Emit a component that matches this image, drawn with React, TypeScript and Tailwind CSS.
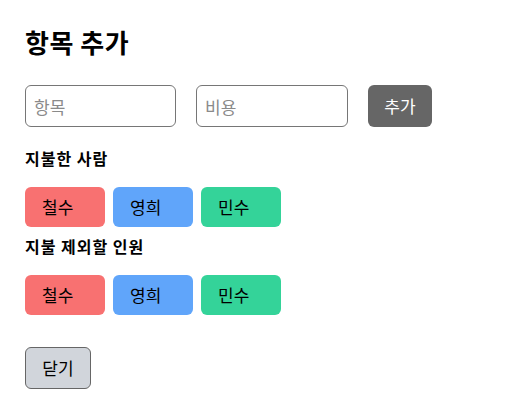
const people = [
  { name: '철수', color: 'bg-[#f87171]' },
  { name: '영희', color: 'bg-[#60a5fa]' },
  { name: '민수', color: 'bg-[#34d399]' },
];

const PersonRow = () => (
  <div className="flex gap-2">
    {people.map((p) => (
      <button
        key={p.name}
        className={`${p.color} w-20 h-10 rounded-md pl-[17px] text-left text-[17px] text-black`}
      >
        {p.name}
      </button>
    ))}
  </div>
);

export default function App() {
  return (
    <div
      className="w-[508px] h-[415px] bg-white px-[25px] pt-[26px]"
      style={{ fontFamily: '"Noto Sans CJK KR", "Noto Sans", sans-serif' }}
    >
      <h2 className="text-[26px] leading-8 font-bold text-black tracking-[0.5px]">항목 추가</h2>

      <div className="flex gap-5 mt-[27px]">
        <input
          type="text"
          placeholder="항목"
          className="w-[151px] h-[42px] border border-[#767676] rounded-md px-2 text-[17px] placeholder:text-[#8a8a8a]"
        />
        <input
          type="text"
          placeholder="비용"
          className="w-[152px] h-[42px] border border-[#767676] rounded-md px-2 text-[17px] placeholder:text-[#8a8a8a]"
        />
        <button className="w-16 h-[42px] bg-[#666666] text-white rounded-md text-[17px]">추가</button>
      </div>

      <h3 className="mt-[19px] text-[16px] leading-6 font-bold text-black tracking-[1px]">지불한 사람</h3>
      <div className="mt-[17px]">
        <PersonRow />
      </div>

      <h3 className="mt-[7px] text-[16px] leading-6 font-bold text-black tracking-[1px]">지불 제외할 인원</h3>
      <div className="mt-[17px]">
        <PersonRow />
      </div>

      <button className="mt-8 w-[66px] h-[42px] bg-[#d1d5db] border border-[#666666] rounded-md text-[17px] text-black">
        닫기
      </button>
    </div>
  );
}
